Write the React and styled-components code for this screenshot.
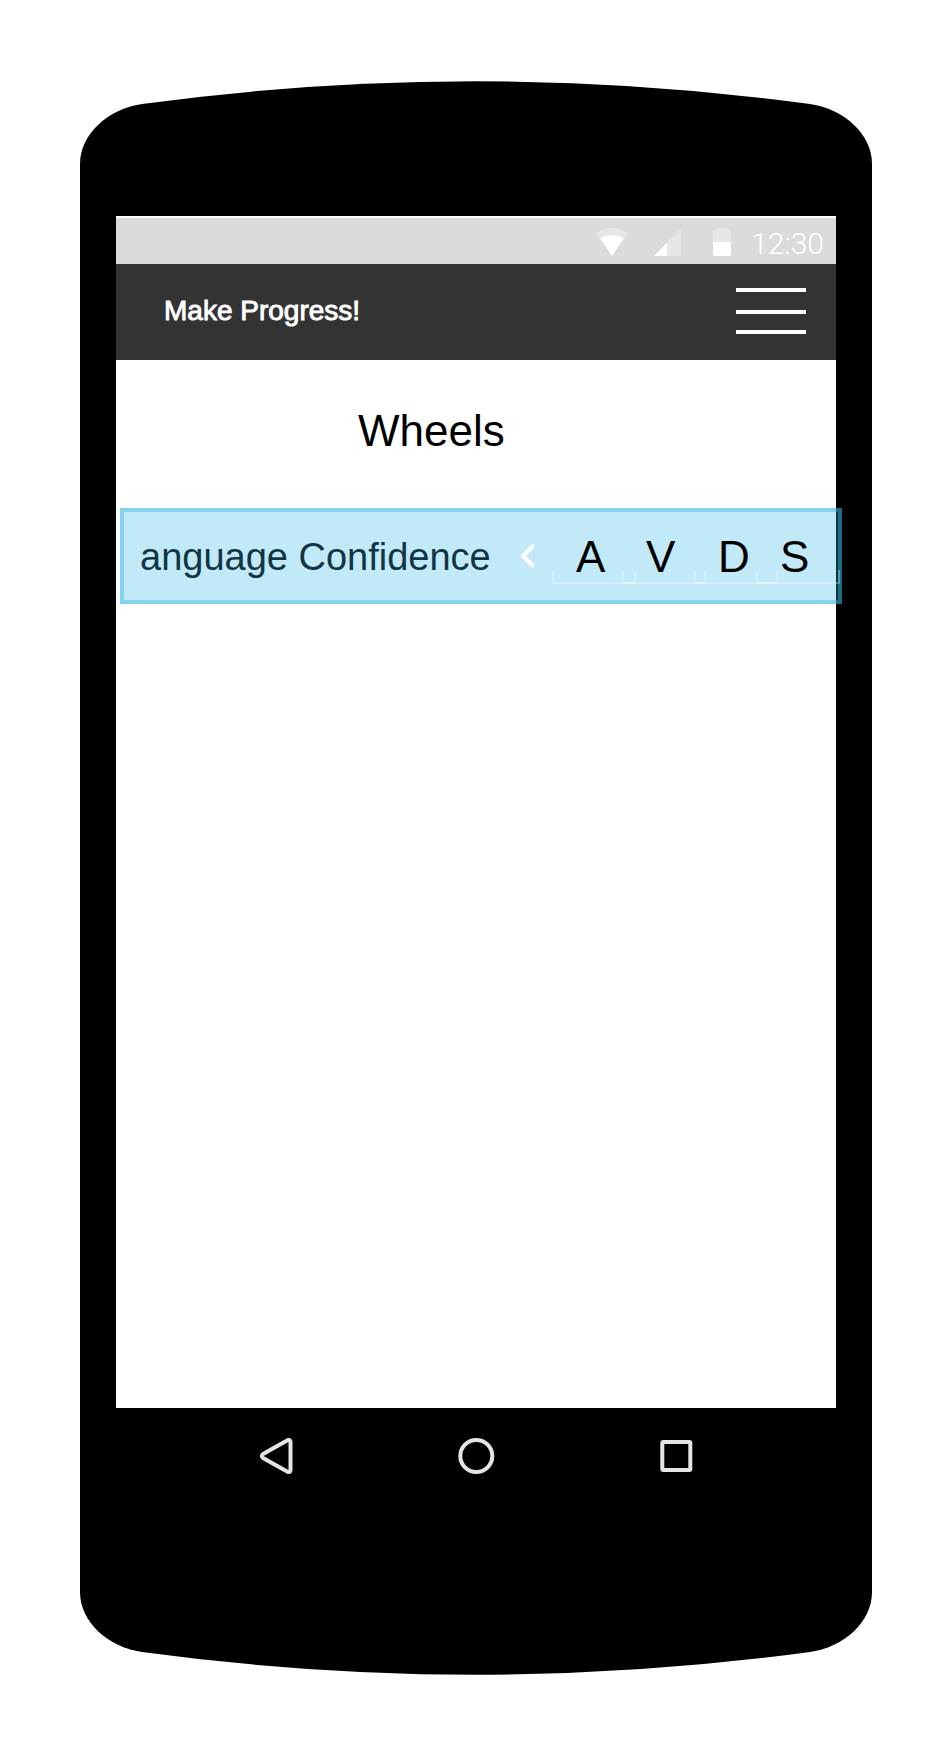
import React from "react";
import styled, { createGlobalStyle } from "styled-components";

const Global = createGlobalStyle`
  * { box-sizing: border-box; }
  body { margin: 0; background: #fff; font-family: "Liberation Sans", Arial, sans-serif; }
`;

const Page = styled.main`
  width: 952px;
  height: 1756px;
  padding: 81px 80px;
  background: #fff;
  overflow: hidden;
`;

const Phone = styled.div`
  position: relative;
  isolation: isolate;
  width: 792px;
  height: 1594px;
  padding: 135px 36px 0;
`;

const Shell = styled.svg`
  position: absolute;
  z-index: -1;
  inset: 0;
  display: block;
`;

const Screen = styled.section`
  width: 720px;
  height: 1192px;
  padding-top: 2px;
  background: #fff;
`;

const StatusBar = styled.div`
  display: flex;
  justify-content: flex-end;
  height: 46px;
  padding-right: 12px;
  background: #dbdbdb;
`;

const StatusIcons = styled.svg`
  flex: none;
  width: 142px;
  height: 46px;
`;

const Clock = styled.span`
  margin-left: 19px;
  font: 300 30px/46px Roboto, sans-serif;
  padding-top: 3px;
  color: #fff;
`;

const Header = styled.header`
  display: flex;
  justify-content: space-between;
  height: 96px;
  padding: 24px 30px 0 48px;
  background: #333;
`;

const AppTitle = styled.h1`
  margin: 0;
  font-size: 28px;
  font-weight: 400;
  line-height: 46px;
  color: #fff;
  -webkit-text-stroke: 0.9px #fff;
`;

const MenuButton = styled.button`
  display: flex;
  flex-direction: column;
  width: 70px;
  height: 46px;
  padding: 0;
  border: 0;
  background: none;
`;

const MenuLine = styled.span`
  width: 70px;
  height: 4px;
  background: #fff;
  margin-bottom: ${(p) => p.$gap}px;
`;

const PageTitle = styled.h2`
  margin: 0;
  padding: 46px 0 0 242px;
  height: 148px;
  font-size: 44px;
  font-weight: 400;
  line-height: 50px;
  color: #000;
`;

const Row = styled.div`
  display: flex;
  width: 722px;
  height: 96px;
  margin-left: 4px;
  border: 4px solid rgba(51, 181, 229, 0.42);
  background: rgba(51, 181, 229, 0.3);
`;

const RowLabel = styled.span`
  flex: none;
  width: 396px;
  padding-left: 16px;
  font-size: 38px;
  line-height: 90px;
  color: #103645;
  white-space: nowrap;
`;

const Chevron = styled.svg`
  flex: none;
  width: 16px;
  height: 26px;
  margin-top: 31px;
`;

const Fields = styled.div`
  display: flex;
  flex: none;
  width: 288px;
  margin-left: 16px;
`;

const Field = styled.span`
  position: relative;
  flex: none;
  width: 84px;
  margin-right: ${(p) => p.$overlap}px;
  padding-left: 24px;
  height: 72px;
  font-size: 44px;
  line-height: 89px;
  color: #000;

  &::after {
    content: "";
    position: absolute;
    left: 0;
    right: 0;
    bottom: 0;
    height: 12px;
    border: 2px solid rgba(255, 255, 255, 0.3);
    border-top: 0;
  }
`;

const NavBar = styled.nav`
  display: flex;
  justify-content: space-between;
  height: 96px;
  padding: 28px 140px 0;
`;

const NavIcon = styled.svg`
  width: 40px;
  height: 40px;
  fill: none;
  stroke: #e5e5e5;
  stroke-width: 4;
  stroke-linejoin: round;
`;

const fields = [
  { letter: "A", overlap: -14 },
  { letter: "V", overlap: -12 },
  { letter: "D", overlap: -22 },
  { letter: "S", overlap: 0 },
];

export default function App() {
  return (
    <Page>
      <Global />
      <Phone>
        <Shell width="792" height="1594" viewBox="80 81 792 1594">
          <path d="M80 164C80 134 108 109 142 104Q476 58.6 810 104C844 109 872 134 872 164V1592C872 1622 844 1647 810 1652Q476 1697.4 142 1652C108 1647 80 1622 80 1592Z" />
        </Shell>
        <Screen>
          <StatusBar>
            <StatusIcons viewBox="590 218 142 46">
              <path fill="#e6e6e6" d="M596 233Q612 223 628 233L612 256Z" />
              <path fill="#fff" d="M600 238Q612 232 624 238L612 256Z" />
              <path fill="#e6e6e6" d="M654 256L681 229V256Z" />
              <path fill="#fff" d="M654 256L667 243V256Z" />
              <path fill="#e6e6e6" d="M713 242V232Q713 230 715 230H717V228H727V230H729Q731 230 731 232V242Z" />
              <path fill="#fff" d="M713 242H731V254Q731 256 729 256H715Q713 256 713 254Z" />
            </StatusIcons>
            <Clock>12:30</Clock>
          </StatusBar>
          <Header>
            <AppTitle>Make Progress!</AppTitle>
            <MenuButton aria-label="Menu">
              <MenuLine $gap={18} />
              <MenuLine $gap={16} />
              <MenuLine $gap={0} />
            </MenuButton>
          </Header>
          <PageTitle>Wheels</PageTitle>
          <Row>
            <RowLabel>anguage Confidence</RowLabel>
            <Chevron viewBox="0 0 16 26">
              <path d="M13.5 2.5L3 13L13.5 23.5" fill="none" stroke="#fff" strokeWidth="4" />
            </Chevron>
            <Fields>
              {fields.map((f) => (
                <Field key={f.letter} $overlap={f.overlap}>
                  {f.letter}
                </Field>
              ))}
            </Fields>
          </Row>
        </Screen>
        <NavBar>
          <NavIcon viewBox="256 1436 40 40">
            <path d="M263 1454L288 1440Q290.500 1439.500 290.500 1442V1470Q290.500 1472.500 288 1472L263 1458Q260.500 1456 263 1454Z" />
          </NavIcon>
          <NavIcon viewBox="456 1436 40 40">
            <circle cx="476.3" cy="1456" r="16" />
          </NavIcon>
          <NavIcon viewBox="656 1436 40 40">
            <rect x="662.3" y="1442" width="28" height="28" rx="1" />
          </NavIcon>
        </NavBar>
      </Phone>
    </Page>
  );
}
